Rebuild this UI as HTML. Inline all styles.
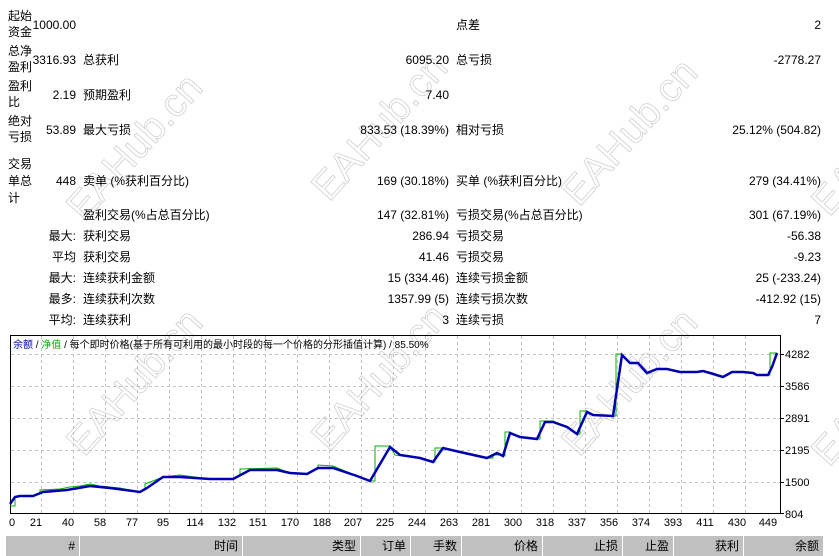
<!DOCTYPE html>
<html><head><meta charset="utf-8"><style>
body{margin:0;width:839px;height:556px;overflow:hidden;background:#fff;font-family:"Liberation Sans","Noto Sans CJK SC",sans-serif;font-size:12px;color:#000;position:relative}
.t{position:absolute;white-space:nowrap;line-height:14px;z-index:2}
.l2{line-height:16px}
.r{text-align:right}
.wm{position:absolute;font-size:40px;color:transparent;-webkit-text-stroke:0.8px #d0d0d0;transform:rotate(-48deg);white-space:nowrap;font-family:"Liberation Sans",sans-serif;z-index:1}
.hd{position:absolute;top:536px;height:20px;background:#c0c0c0;line-height:20px;text-align:right;box-sizing:border-box;padding-right:4px;z-index:2}
svg{z-index:0}
</style></head><body>
<div class="wm" style="left:45px;top:125px">EAHub.cn</div>
<div class="wm" style="left:290px;top:105px">EAHub.cn</div>
<div class="wm" style="left:540px;top:110px">EAHub.cn</div>
<div class="wm" style="left:790px;top:120px">EAHub.cn</div>
<div class="wm" style="left:45px;top:360px">EAHub.cn</div>
<div class="wm" style="left:290px;top:355px">EAHub.cn</div>
<div class="wm" style="left:540px;top:360px">EAHub.cn</div>
<div class="wm" style="left:790px;top:370px">EAHub.cn</div>

<div class="t l2" style="left:8px;top:8px">起始<br>资金</div><div class="t r" style="left:20px;width:56px;top:18px">1000.00</div>
<div class="t" style="left:456px;top:18px">点差</div><div class="t r" style="left:700px;width:121px;top:18px">2</div>

<div class="t l2" style="left:8px;top:43px">总净<br>盈利</div><div class="t r" style="left:20px;width:56px;top:53px">3316.93</div>
<div class="t" style="left:83px;top:53px">总获利</div><div class="t r" style="left:330px;width:119px;top:53px">6095.20</div>
<div class="t" style="left:456px;top:53px">总亏损</div><div class="t r" style="left:700px;width:121px;top:53px">-2778.27</div>

<div class="t l2" style="left:8px;top:78px">盈利<br>比</div><div class="t r" style="left:20px;width:56px;top:88px">2.19</div>
<div class="t" style="left:83px;top:88px">预期盈利</div><div class="t r" style="left:330px;width:119px;top:88px">7.40</div>

<div class="t l2" style="left:8px;top:113px">绝对<br>亏损</div><div class="t r" style="left:20px;width:56px;top:123px">53.89</div>
<div class="t" style="left:83px;top:123px">最大亏损</div><div class="t r" style="left:300px;width:149px;top:123px">833.53 (18.39%)</div>
<div class="t" style="left:456px;top:123px">相对亏损</div><div class="t r" style="left:680px;width:141px;top:123px">25.12% (504.82)</div>

<div class="t" style="left:8px;top:156px;line-height:17px">交易<br>单总<br>计</div><div class="t r" style="left:20px;width:56px;top:174px">448</div>
<div class="t" style="left:83px;top:174px">卖单 (%获利百分比)</div><div class="t r" style="left:300px;width:149px;top:174px">169 (30.18%)</div>
<div class="t" style="left:456px;top:174px">买单 (%获利百分比)</div><div class="t r" style="left:680px;width:141px;top:174px">279 (34.41%)</div>

<div class="t" style="left:83px;top:208px">盈利交易(%占总百分比)</div><div class="t r" style="left:300px;width:149px;top:208px">147 (32.81%)</div>
<div class="t" style="left:456px;top:208px">亏损交易(%占总百分比)</div><div class="t r" style="left:680px;width:141px;top:208px">301 (67.19%)</div>

<div class="t r" style="left:20px;width:56px;top:229px">最大:</div><div class="t" style="left:83px;top:229px">获利交易</div><div class="t r" style="left:300px;width:149px;top:229px">286.94</div>
<div class="t" style="left:456px;top:229px">亏损交易</div><div class="t r" style="left:680px;width:141px;top:229px">-56.38</div>

<div class="t r" style="left:20px;width:56px;top:250px">平均</div><div class="t" style="left:83px;top:250px">获利交易</div><div class="t r" style="left:300px;width:149px;top:250px">41.46</div>
<div class="t" style="left:456px;top:250px">亏损交易</div><div class="t r" style="left:680px;width:141px;top:250px">-9.23</div>

<div class="t r" style="left:20px;width:56px;top:271px">最大:</div><div class="t" style="left:83px;top:271px">连续获利金额</div><div class="t r" style="left:300px;width:149px;top:271px">15 (334.46)</div>
<div class="t" style="left:456px;top:271px">连续亏损金额</div><div class="t r" style="left:680px;width:141px;top:271px">25 (-233.24)</div>

<div class="t r" style="left:20px;width:56px;top:292px">最多:</div><div class="t" style="left:83px;top:292px">连续获利次数</div><div class="t r" style="left:300px;width:149px;top:292px">1357.99 (5)</div>
<div class="t" style="left:456px;top:292px">连续亏损次数</div><div class="t r" style="left:680px;width:141px;top:292px">-412.92 (15)</div>

<div class="t r" style="left:20px;width:56px;top:313px">平均:</div><div class="t" style="left:83px;top:313px">连续获利</div><div class="t r" style="left:300px;width:149px;top:313px">3</div>
<div class="t" style="left:456px;top:313px">连续亏损</div><div class="t r" style="left:680px;width:141px;top:313px">7</div>

<svg style="position:absolute;left:0;top:0;z-index:2" width="839" height="556">
<rect x="10.5" y="335.5" width="770" height="178" fill="none" stroke="#000"/>
<g stroke="#c0c0c0" stroke-dasharray="3,3" fill="none">
<path d="M11 354.5H780M11 386.5H780M11 418.5H780M11 450.5H780M11 482.5H780"/>
<path d="M41.5 336V513M73.5 336V513M105.5 336V513M137.5 336V513M169.5 336V513M201.5 336V513M233.5 336V513M265.5 336V513M297.5 336V513M329.5 336V513M361.5 336V513M393.5 336V513M425.5 336V513M457.5 336V513M489.5 336V513M521.5 336V513M553.5 336V513M585.5 336V513M617.5 336V513M649.5 336V513M681.5 336V513M713.5 336V513M745.5 336V513"/>
</g>
<g stroke="#000"><path d="M780 354.5h4M780 386.5h4M780 418.5h4M780 450.5h4M780 482.5h4M780 513.5h4"/></g>
<polyline fill="none" stroke="#00b000" stroke-width="1" points="10,506 15,506 15,497 22,496 33,496 40,494 40,490 60,489 70,487 80,486 90,484 100,486 120,488 140,492 145,490 145,484 163,477 180,475 210,479 233,479 240,476 240,469 277,468 290,473 307,474 318,468 318,465 333,466 357,476 370,481 375,481 375,446 390,446 395,455 420,458 433,462 435,462 435,448 443,448 460,452 487,458 493,458 493,455 503,455 505,456 505,432 510,432 520,437 537,439 540,439 540,421 553,421 567,427 577,434 580,434 580,411 587,411 593,415 613,416 616,416 616,354 622,354 630,363 638,363 647,373 657,369 667,369 680,372 697,372 703,371 710,373 723,377 732,372 743,372 753,373 757,375 768,375 770,375 770,353 777,353"/>
<polyline fill="none" stroke="#0000b0" stroke-width="2.5" points="10,504 15,497 20,496 33,496 43,492 67,490 90,486 110,488 140,492 147,488 163,477 180,477 210,479 233,479 250,470 277,470 290,473 307,474 318,468 333,468 357,476 370,481 390,447 400,455 420,458 433,462 443,448 460,452 487,458 497,453 503,456 510,433 520,437 537,439 545,422 553,422 567,427 577,434 587,412 593,415 613,416 622,355 630,363 638,363 647,373 657,369 667,369 680,372 697,372 703,371 710,373 723,377 732,372 743,372 753,373 757,375 768,375 772,367 777,353"/>
<g font-family="Liberation Sans,sans-serif" font-size="11" fill="#000">
<text x="785" y="358">4282</text><text x="785" y="390">3586</text><text x="785" y="422">2891</text><text x="785" y="454">2195</text><text x="785" y="486">1500</text><text x="785" y="518">804</text>
<g text-anchor="middle">
<text x="12" y="526">0</text><text x="36" y="526">21</text><text x="68" y="526">40</text><text x="100" y="526">58</text><text x="132" y="526">77</text><text x="163" y="526">95</text><text x="195" y="526">114</text><text x="227" y="526">132</text><text x="258" y="526">151</text><text x="290" y="526">170</text><text x="322" y="526">188</text><text x="353" y="526">207</text><text x="385" y="526">225</text><text x="417" y="526">244</text><text x="449" y="526">263</text><text x="481" y="526">281</text><text x="513" y="526">300</text><text x="545" y="526">318</text><text x="577" y="526">337</text><text x="609" y="526">356</text><text x="641" y="526">374</text><text x="673" y="526">393</text><text x="705" y="526">411</text><text x="737" y="526">430</text><text x="768" y="526">449</text>
</g>
<text x="13" y="348" font-size="10" font-family="Liberation Sans,Noto Sans CJK SC,sans-serif"><tspan fill="#0000b0">余额</tspan> / <tspan fill="#00b000">净值</tspan> / 每个即时价格(基于所有可利用的最小时段的每一个价格的分形插值计算) / 85.50%</text>
</g>
</svg>

<div class="hd" style="left:6px;width:73px">#</div>
<div class="hd" style="left:80px;width:162px">时间</div>
<div class="hd" style="left:243px;width:117px">类型</div>
<div class="hd" style="left:361px;width:49px">订单</div>
<div class="hd" style="left:411px;width:50px">手数</div>
<div class="hd" style="left:462px;width:80px">价格</div>
<div class="hd" style="left:543px;width:79px">止损</div>
<div class="hd" style="left:623px;width:50px">止盈</div>
<div class="hd" style="left:674px;width:69px">获利</div>
<div class="hd" style="left:744px;width:79px">余额</div>
</body></html>
